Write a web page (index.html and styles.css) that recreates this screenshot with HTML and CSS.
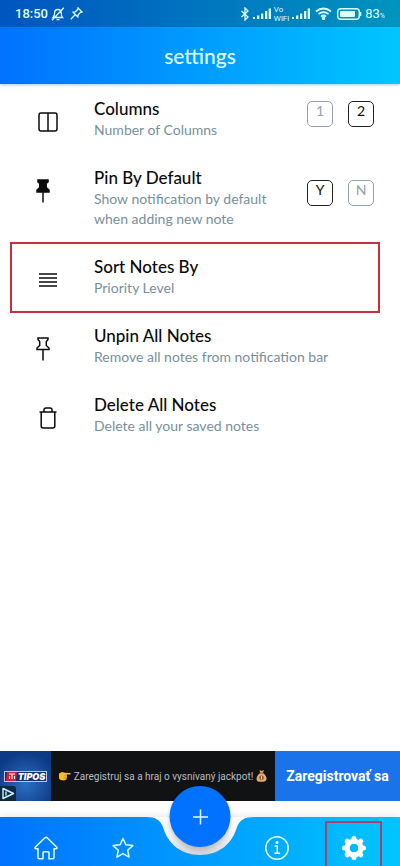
FILE: index.html
```html
<!DOCTYPE html>
<html lang="en">
<head>
<meta charset="utf-8">
<meta name="viewport" content="width=device-width, initial-scale=1">
<title>settings</title>
<link rel="stylesheet" href="styles.css">
</head>
<body>
<header class="top">
  <div class="status">
    <div class="status-group">
      <span class="clock">18:50</span>
      <svg width="14" height="14" viewBox="0 0 14 14" class="line"><path d="M2 10.500h9.500c-1-1-1.200-2-1.200-4.500 0-2-1-3.500-3.300-3.500S3.600 4 3.600 6c0 2.500-.4 3.500-1.600 4.500zM5.500 12.700h3M12.800.8 1 13.200"/></svg>
      <svg class="line push" width="13" height="13" viewBox="0 0 13 13"><path d="M8 1l4 4-1.600.3-2.200 2.400-.4 2.300L3 5.200l2.300-.4 2.400-2.200zM5.200 7.600.8 12.200"/></svg>
    </div>
    <div class="status-group">
      <svg class="line" width="10" height="14" viewBox="0 0 10 14"><path d="M1.500 4l6.500 6-3 3V1l3 3-6.500 6"/></svg>
      <svg class="solid" width="18" height="12" viewBox="0 0 18 12"><path d="M0 9h2v2H0zM4 7.500h2.300V11H4zM8 5.500h2.300V11H8zM12 3h2.300v8H12zM15.700.5H18V11h-2.300z"/></svg>
      <span class="vowifi"><span>Vo</span><span>WiFi</span></span>
      <svg class="solid" width="18" height="12" viewBox="0 0 18 12"><path d="M0 9h2v2H0zM4 7.500h2.300V11H4zM8 5.500h2.300V11H8zM12 3h2.300v8H12zM15.700.5H18V11h-2.300z"/></svg>
      <svg class="line wifi" width="17" height="13" viewBox="0 0 17 13"><path d="M1 4.500c4.500-4 10.500-4 15 0M3.500 7.200c3-2.700 7-2.700 10 0M6 9.700c1.500-1.400 3.500-1.400 5 0"/><circle cx="8.500" cy="11.500" r=".8"/></svg>
      <svg width="25" height="12" viewBox="0 0 25 12"><rect x=".7" y=".7" width="21.600" height="10.600" rx="3" fill="none" stroke="#dff" stroke-width="1.400"/><rect x="3" y="3" width="15" height="6" rx="1" fill="#dff"/><path d="M23.500 4v4" stroke="#dff" stroke-width="1.600"/></svg>
      <span class="battery">83<small>%</small></span>
    </div>
  </div>
  <h1>settings</h1>
</header>

<main>
  <ul class="list">
    <li class="row">
      <span class="icon"><svg width="20" height="20" viewBox="0 0 20 20"><rect x="1" y="1" width="18" height="18" rx="2"/><path d="M10 1v18"/></svg></span>
      <div class="text"><h2>Columns</h2><p>Number of Columns</p></div>
      <div class="choices"><button type="button" aria-pressed="false">1</button><button type="button" aria-pressed="true">2</button></div>
    </li>
    <li class="row">
      <span class="icon pin filled"><svg width="14" height="24" viewBox="0 0 14 24"><path d="M2 1h10v2l-1.800 1.500v4L13 11v2H1v-2l2.800-2.500v-4L2 3z"/><path d="M7 13v10.500"/></svg></span>
      <div class="text"><h2>Pin By Default</h2><p>Show notification by default when adding new note</p></div>
      <div class="choices"><button type="button" aria-pressed="true">Y</button><button type="button" aria-pressed="false">N</button></div>
    </li>
    <li class="row marked">
      <span class="icon"><svg width="18" height="14" viewBox="0 0 18 14"><path d="M0 1h18M0 5h18M0 9h18M0 13h18"/></svg></span>
      <button type="button" class="text"><span class="title">Sort Notes By</span><span class="desc">Priority Level</span></button>
    </li>
    <li class="row">
      <span class="icon pin"><svg width="14" height="24" viewBox="0 0 14 24"><path d="M2 1h10v1.500L10.300 4.500v4L13 11v1.500H1V11l2.700-2.500v-4L2 2.500z"/><path d="M7 12.500v11"/></svg></span>
      <button type="button" class="text"><span class="title">Unpin All Notes</span><span class="desc">Remove all notes from notification bar</span></button>
    </li>
    <li class="row">
      <span class="icon"><svg width="18" height="22" viewBox="0 0 18 22"><path d="M.5 5h17M2.200 5v14q0 2 2 2h9.600q2 0 2-2V5M5 5V3q0-2 2-2h4q2 0 2 2v2"/></svg></span>
      <button type="button" class="text"><span class="title">Delete All Notes</span><span class="desc">Delete all your saved notes</span></button>
    </li>
  </ul>
</main>

<aside class="ad">
  <div class="ad-logo">
    <span class="brand"><svg width="11" height="9" viewBox="0 0 11 9"><path d="M1 0h10L10 9H0z" fill="#d91f35"/><path d="M3 2h6M6 2v5M3.500 4v3M8.500 4v3" stroke="#fff" stroke-width="1"/></svg><b>TIPOS</b></span>
    <svg class="adchoices" width="16" height="15" viewBox="0 0 16 15"><path d="M0 0h13q3 0 3 3v12H0z" fill="#102840"/><path d="M3 2.500v10L13.500 7.500zM6 5.500v4" fill="none" stroke="#c8f4ff" stroke-width="1.400" stroke-linejoin="round"/></svg>
  </div>
  <p class="ad-text">
    <svg width="12" height="10" viewBox="0 0 12 10"><path d="M0 2.500 3 1l3 .8 5.200.1q1 .8 0 1.600H7.500L8 5l-.5 3.500L5 9.500 1.500 9 0 7.500z" fill="#fdbb25"/><path d="M5 4.700h3M5 6.300h2.800M4.500 7.900h2.700" stroke="#d98a13" stroke-width=".6"/></svg>
    <span>Zaregistruj sa a hraj o vysnívaný jackpot!</span>
    <svg width="11" height="12" viewBox="0 0 11 12"><path d="M3.500 0 5.500 1 7.800 0 7 3q4 3 3.500 6.500-.5 2-3 2.200h-4Q.5 11.500.5 9 .7 5.500 4.200 3z" fill="#e5aa70"/><path d="M4 3h3" stroke="#8d542c"/><circle cx="5.500" cy="7.700" r="2.300" fill="#8d542c"/><path d="M5.500 6v3.500" stroke="#ffd27c"/></svg>
  </p>
  <a class="ad-cta" href="#register">Zaregistrovať sa</a>
</aside>

<nav class="nav" aria-label="Main">
  <svg class="notch" width="108" height="41" viewBox="0 0 108 41" aria-hidden="true">
    <defs><linearGradient id="shade" x1="0" y1="0" x2="0" y2="1"><stop offset="0" stop-color="#fff"/><stop offset=".55" stop-color="#f2f3f5"/><stop offset="1" stop-color="#d4d6da"/></linearGradient></defs>
    <path d="M0 0C10 0 14 3 17 10C22 27 35 38 54 38S86 27 91 10C94 3 98 0 108 0z" fill="url(#shade)"/>
  </svg>
  <a href="#home" aria-label="Home"><svg width="24" height="24" viewBox="0 0 24 24"><path d="M1.200 11.300 10.600 2q1.400-1.300 2.800 0l9.400 9.300q.8 1.400-1 1.500H20v9q0 1-1 1h-4v-6q0-1-1-1h-4q-1 0-1 1v6H5q-1 0-1-1v-9H2.200q-1.800-.1-1-1.500z"/></svg></a>
  <a href="#favourites" aria-label="Favourites"><svg width="22" height="22" viewBox="0 0 22 22"><path d="m11 1.500 2.900 6.300 6.900.8-5.100 4.700 1.400 6.800L11 16.700l-6.100 3.400 1.400-6.800L1.200 8.600l6.900-.8z"/></svg></a>
  <button type="button" class="add" aria-label="Add note"><svg width="16" height="16" viewBox="0 0 16 16"><path d="M8 .5v15M.5 8h15"/></svg></button>
  <a href="#about" class="after" aria-label="About"><svg width="24" height="24" viewBox="0 0 24 24"><circle cx="12" cy="12" r="11.200"/><path d="M9.500 10h2.800v7M9.300 17.300h5.800"/><circle cx="12" cy="6.500" r=".8" fill="#dff"/></svg></a>
  <a href="#settings" class="active" aria-label="Settings" aria-current="page"><svg width="24" height="24" viewBox="0 0 24 24"><circle cx="12" cy="12" r="7" fill="none" stroke="#fff" stroke-width="5"/><path d="M12 2.500v3M12 18.500v3M2.500 12h3M18.500 12h3M5.200 5.200l2 2M16.800 16.800l2 2M5.200 18.800l2-2M16.800 7.200l2-2" stroke="#fff" stroke-width="5" stroke-linecap="round"/></svg></a>
</nav>
</body>
</html>
```
FILE: styles.css
```css
* { box-sizing: border-box; }
body {
  margin: 0;
  min-height: 100vh;
  display: flex;
  flex-direction: column;
  background: #fff;
  color: #0b0b0b;
  font-family: Lato, "Noto Sans", sans-serif;
}
h1, h2, p, ul { margin: 0; padding: 0; }
svg { display: block; flex: none; }
button { font: inherit; color: inherit; background: none; border: 0; padding: 0; }

.top {
  background: linear-gradient(90deg, #0072ff, #00c6ff);
  color: #dff;
  box-shadow: 0 1px 3px rgba(0, 110, 180, .35);
}
.status {
  height: 27px;
  padding: 0 15px;
  display: flex;
  justify-content: space-between;
  align-items: center;
  background: rgba(0, 0, 0, .25);
  font-family: Roboto, sans-serif;
  font-size: 13px;
}
.status-group { display: flex; align-items: center; gap: 3px; }
.clock { font-weight: 500; }
.line { fill: none; stroke: #dff; stroke-width: 1.3; }
.push { margin-left: 2px; }
.wifi { margin: 0 2px; stroke-width: 1.8; }
.solid { fill: #dff; }
.vowifi { display: flex; flex-direction: column; font-size: 8px; line-height: 9px; }
.battery small { font-size: 7px; }
h1 {
  font-size: 21px;
  line-height: 57px;
  font-weight: 500;
  text-align: center;
}

main { flex: 1; }
.list { list-style: none; }
.row {
  position: relative;
  display: flex;
  padding: 14px 26px 13px 22px;
}
.icon {
  width: 52px;
  height: 48px;
  margin-right: 20px;
  margin-bottom: -6px;
  display: flex;
  align-items: center;
  justify-content: center;
}
.pin { padding-right: 10px; }
.icon svg { fill: none; stroke: #0b0b0b; stroke-width: 1.5; }
.filled svg { fill: #0b0b0b; }
.text { flex: 1; text-align: left; }
h2, .title {
  display: block;
  font-size: 17px;
  line-height: 22px;
  font-weight: 500;
}
.text p, .desc {
  display: block;
  font-size: 14px;
  line-height: 20px;
  color: #78909c;
}
.choices {
  align-self: center;
  display: flex;
  gap: 15px;
  margin: 0 0 11px 24px;
}
.choices button {
  width: 26px;
  height: 26px;
  padding-bottom: 6px;
  border: 1px solid #90a4ae;
  border-radius: 5px;
  color: #90a4ae;
  font-size: 14px;
  line-height: 18px;
}
.choices button[aria-pressed="true"] { border-color: #222; color: #111; }
.marked::after {
  content: "";
  position: absolute;
  inset: 0 20px -2px 10px;
  border: 2px solid #c6303a;
  pointer-events: none;
}

.ad {
  display: flex;
  height: 50px;
  margin-bottom: 16px;
  background: #111214;
  font-family: Roboto, sans-serif;
}
.ad-logo {
  position: relative;
  width: 51px;
  display: flex;
  align-items: center;
  justify-content: center;
  background: radial-gradient(circle at 50% 65%, #2d6fc4, #0d3a85 75%);
}
.brand {
  display: flex;
  align-items: center;
  gap: 1px;
  padding: 0 1px;
  background: #142f77;
  border: 1px solid #b9c8e6;
  color: #fff;
  font-family: Inter, sans-serif;
  font-size: 9px;
  line-height: 9px;
  font-style: italic;
}
.brand b { font-weight: 900; }
.adchoices { position: absolute; left: 0; bottom: 0; }
.ad-text {
  flex: 1;
  display: flex;
  align-items: center;
  justify-content: center;
  gap: 3px;
  color: #b9bcc1;
  font-size: 10px;
  white-space: nowrap;
}
.ad-cta {
  width: 125px;
  line-height: 50px;
  text-align: center;
  background: #1a73e8;
  color: #fff;
  font-size: 14px;
  font-weight: 700;
  text-decoration: none;
}

.nav {
  position: relative;
  display: grid;
  grid-template-columns: repeat(5, 1fr);
  height: 49px;
  padding: 0 8px;
  background: linear-gradient(90deg, #0072ff, #00c6ff);
  box-shadow: 0 -1px 8px rgba(0, 0, 0, .1);
}
.nav a {
  position: relative;
  display: flex;
  align-items: center;
  justify-content: center;
  padding-top: 12px;
}
.nav svg { fill: none; stroke: #dff; stroke-width: 1.5; stroke-linejoin: round; }
.nav .notch { position: absolute; top: 0; left: 50%; transform: translateX(-50%); stroke: none; }
.add {
  position: absolute;
  top: -31px;
  left: 50%;
  transform: translateX(-50%);
  width: 61px;
  height: 61px;
  border-radius: 50%;
  background: #0072ff;
  box-shadow: 0 3px 5px rgba(0, 0, 0, .2);
  display: flex;
  align-items: center;
  justify-content: center;
}
.after { grid-column: 4; }
.active::after {
  content: "";
  position: absolute;
  inset: 4px 10px 0;
  border: 2px solid #a54468;
  border-bottom: 0;
}
```
